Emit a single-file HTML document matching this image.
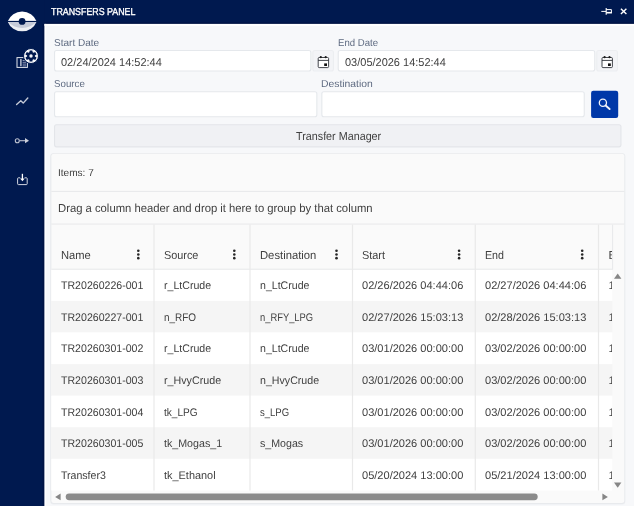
<!DOCTYPE html>
<html><head><meta charset="utf-8">
<style>
*{box-sizing:border-box;margin:0;padding:0}
html,body{width:634px;height:506px;overflow:hidden;background:#f7f8fa;font-family:"Liberation Sans",sans-serif;}
.t{position:absolute;white-space:pre;line-height:normal;transform-origin:0 0;text-rendering:geometricPrecision}
#w{position:absolute;left:-10px;top:-10px;width:654px;height:526px;filter:blur(.3px);overflow:hidden}
#in{position:absolute;left:10px;top:10px;width:634px;height:506px}
</style></head><body>
<div id="w"><div id="in">
<svg width="634" height="506" viewBox="0 0 634 506" style="position:absolute;left:0;top:0;overflow:visible">
<rect x="-10.00" y="-10.00" width="654.00" height="526.00" fill="#f7f8fa"/>
<rect x="-10.00" y="-10.00" width="654.00" height="33.90" fill="#00194f"/>
<rect x="-10.00" y="-10.00" width="54.50" height="526.00" fill="#00194f"/>
<rect x="42.60" y="23.90" width="1.90" height="492.10" fill="#001344"/>
<rect x="44.50" y="22.50" width="599.50" height="1.40" fill="#001344"/>
<rect x="44.50" y="23.90" width="599.50" height="2.00" fill="#ffffff"/>
<rect x="44.50" y="23.90" width="1.70" height="492.10" fill="#ffffff"/>
<rect x="54.55" y="50.55" width="256.30" height="20.40" fill="#fff" rx="2" stroke="#e5e8ec" stroke-width="1.1"/>
<rect x="312.85" y="50.55" width="20.60" height="20.40" fill="#f3f4f7" rx="2" stroke="#eceef1" stroke-width="1.1"/>
<rect x="338.25" y="50.55" width="256.50" height="20.40" fill="#fff" rx="2" stroke="#e5e8ec" stroke-width="1.1"/>
<rect x="596.75" y="50.55" width="20.70" height="20.40" fill="#f3f4f7" rx="2" stroke="#eceef1" stroke-width="1.1"/>
<rect x="54.55" y="91.75" width="262.30" height="25.00" fill="#fff" rx="2" stroke="#e5e8ec" stroke-width="1.1"/>
<rect x="321.85" y="91.75" width="262.40" height="25.00" fill="#fff" rx="2" stroke="#e5e8ec" stroke-width="1.1"/>
<rect x="591.10" y="90.70" width="27.10" height="27.20" fill="#0038a8" rx="2.2"/>
<rect x="54.55" y="124.75" width="566.40" height="22.10" fill="#f0f1f4" rx="2" stroke="#e3e5e9" stroke-width="1.1"/>
<rect x="50.10" y="153.10" width="575.30" height="351.50" fill="#eceef1" rx="3.5"/>
<rect x="50.80" y="153.60" width="574.00" height="350.00" fill="#e4e6ea" rx="3.2"/>
<rect x="51.30" y="153.80" width="573.10" height="349.20" fill="#fafafa" rx="2.5"/>
<rect x="51.30" y="190.90" width="573.10" height="1.10" fill="#e9eaec"/>
<rect x="51.30" y="223.50" width="573.10" height="1.10" fill="#e9eaec"/>
<rect x="51.30" y="269.30" width="561.00" height="31.60" fill="#ffffff"/>
<rect x="51.30" y="300.90" width="561.00" height="31.60" fill="#f5f5f5"/>
<rect x="51.30" y="332.50" width="561.00" height="31.60" fill="#ffffff"/>
<rect x="51.30" y="364.10" width="561.00" height="31.60" fill="#f5f5f5"/>
<rect x="51.30" y="395.70" width="561.00" height="31.60" fill="#ffffff"/>
<rect x="51.30" y="427.30" width="561.00" height="31.60" fill="#f5f5f5"/>
<rect x="51.30" y="458.90" width="561.00" height="31.60" fill="#ffffff"/>
<rect x="51.30" y="268.70" width="561.00" height="1.10" fill="#e9eaec"/>
<rect x="153.40" y="224.60" width="1.20" height="265.90" fill="#e9e9e9"/>
<rect x="249.40" y="224.60" width="1.20" height="265.90" fill="#e9e9e9"/>
<rect x="351.90" y="224.60" width="1.20" height="265.90" fill="#e9e9e9"/>
<rect x="474.70" y="224.60" width="1.20" height="265.90" fill="#e9e9e9"/>
<rect x="597.90" y="224.60" width="1.20" height="265.90" fill="#e9e9e9"/>
<rect x="612.00" y="224.60" width="1.10" height="45.20" fill="#e9eaec"/>
<circle cx="138.3" cy="250.75" r="1.3" fill="#262626"/>
<circle cx="138.3" cy="254.45" r="1.3" fill="#262626"/>
<circle cx="138.3" cy="258.15" r="1.3" fill="#262626"/>
<circle cx="234.3" cy="250.75" r="1.3" fill="#262626"/>
<circle cx="234.3" cy="254.45" r="1.3" fill="#262626"/>
<circle cx="234.3" cy="258.15" r="1.3" fill="#262626"/>
<circle cx="336.5" cy="250.75" r="1.3" fill="#262626"/>
<circle cx="336.5" cy="254.45" r="1.3" fill="#262626"/>
<circle cx="336.5" cy="258.15" r="1.3" fill="#262626"/>
<circle cx="459.1" cy="250.75" r="1.3" fill="#262626"/>
<circle cx="459.1" cy="254.45" r="1.3" fill="#262626"/>
<circle cx="459.1" cy="258.15" r="1.3" fill="#262626"/>
<circle cx="582.2" cy="250.75" r="1.3" fill="#262626"/>
<circle cx="582.2" cy="254.45" r="1.3" fill="#262626"/>
<circle cx="582.2" cy="258.15" r="1.3" fill="#262626"/>
</svg>
<div class="t" style="left:51.00px;top:7.20px;font-size:10.1px;color:#fff;transform:scaleX(0.8765);-webkit-text-stroke:0.35px #fff">TRANSFERS PANEL</div>
<div class="t" style="left:54.10px;top:38.00px;font-size:10.0px;color:#5e6a80;transform:scaleX(1.0037)">Start Date</div>
<div class="t" style="left:337.90px;top:38.00px;font-size:10.0px;color:#5e6a80;transform:scaleX(0.9592)">End Date</div>
<div class="t" style="left:54.10px;top:79.00px;font-size:10.0px;color:#5e6a80;transform:scaleX(0.9720)">Source</div>
<div class="t" style="left:321.30px;top:79.00px;font-size:10.0px;color:#5e6a80;transform:scaleX(1.0354)">Destination</div>
<div class="t" style="left:61.30px;top:56.50px;font-size:11.3px;color:#404040;transform:scaleX(0.9724)">02/24/2024 14:52:44</div>
<div class="t" style="left:345.30px;top:56.50px;font-size:11.3px;color:#404040;transform:scaleX(0.9724)">03/05/2026 14:52:44</div>
<div class="t" style="left:296.10px;top:129.60px;font-size:11.6px;color:#404040;transform:scaleX(0.9289)">Transfer Manager</div>
<div class="t" style="left:58.10px;top:167.90px;font-size:10.0px;color:#404040;transform:scaleX(1.0062)">Items: 7</div>
<div class="t" style="left:58.10px;top:201.60px;font-size:11.6px;color:#404040;transform:scaleX(0.9723)">Drag a column header and drop it here to group by that column</div>
<div class="t" style="left:61.40px;top:250.30px;font-size:11.5px;color:#404040;transform:scaleX(0.9711)">Name</div>
<div class="t" style="left:164.20px;top:250.30px;font-size:11.5px;color:#404040;transform:scaleX(0.9441)">Source</div>
<div class="t" style="left:260.40px;top:250.30px;font-size:11.5px;color:#404040;transform:scaleX(0.9783)">Destination</div>
<div class="t" style="left:362.40px;top:250.30px;font-size:11.5px;color:#404040;transform:scaleX(0.9466)">Start</div>
<div class="t" style="left:485.40px;top:250.30px;font-size:11.5px;color:#404040;transform:scaleX(0.9282)">End</div>
<div class="t" style="left:608.40px;top:250.30px;font-size:11.5px;color:#404040;width:4.1px;overflow:hidden">E</div>
<div class="t" style="left:61.40px;top:280.20px;font-size:11px;color:#404040;transform:scaleX(0.9623)">TR20260226-001</div>
<div class="t" style="left:164.20px;top:280.20px;font-size:11px;color:#404040;transform:scaleX(0.9628)">r_LtCrude</div>
<div class="t" style="left:260.40px;top:280.20px;font-size:11px;color:#404040;transform:scaleX(0.9616)">n_LtCrude</div>
<div class="t" style="left:362.40px;top:280.20px;font-size:11px;color:#404040;transform:scaleX(1.0036)">02/26/2026 04:44:06</div>
<div class="t" style="left:485.40px;top:280.20px;font-size:11px;color:#404040;transform:scaleX(1.0036)">02/27/2026 04:44:06</div>
<div class="t" style="left:608.40px;top:280.20px;font-size:11px;color:#404040;width:3.6px;overflow:hidden">1</div>
<div class="t" style="left:61.40px;top:311.82px;font-size:11px;color:#404040;transform:scaleX(0.9623)">TR20260227-001</div>
<div class="t" style="left:164.20px;top:311.82px;font-size:11px;color:#404040;transform:scaleX(0.9050)">n_RFO</div>
<div class="t" style="left:260.40px;top:311.82px;font-size:11px;color:#404040;transform:scaleX(0.8513)">n_RFY_LPG</div>
<div class="t" style="left:362.40px;top:311.82px;font-size:11px;color:#404040;transform:scaleX(1.0036)">02/27/2026 15:03:13</div>
<div class="t" style="left:485.40px;top:311.82px;font-size:11px;color:#404040;transform:scaleX(1.0036)">02/28/2026 15:03:13</div>
<div class="t" style="left:608.40px;top:311.82px;font-size:11px;color:#404040;width:3.6px;overflow:hidden">1</div>
<div class="t" style="left:61.40px;top:343.44px;font-size:11px;color:#404040;transform:scaleX(0.9623)">TR20260301-002</div>
<div class="t" style="left:164.20px;top:343.44px;font-size:11px;color:#404040;transform:scaleX(0.9628)">r_LtCrude</div>
<div class="t" style="left:260.40px;top:343.44px;font-size:11px;color:#404040;transform:scaleX(0.9616)">n_LtCrude</div>
<div class="t" style="left:362.40px;top:343.44px;font-size:11px;color:#404040;transform:scaleX(1.0036)">03/01/2026 00:00:00</div>
<div class="t" style="left:485.40px;top:343.44px;font-size:11px;color:#404040;transform:scaleX(1.0036)">03/02/2026 00:00:00</div>
<div class="t" style="left:608.40px;top:343.44px;font-size:11px;color:#404040;width:3.6px;overflow:hidden">1</div>
<div class="t" style="left:61.40px;top:375.06px;font-size:11px;color:#404040;transform:scaleX(0.9623)">TR20260301-003</div>
<div class="t" style="left:164.20px;top:375.06px;font-size:11px;color:#404040;transform:scaleX(0.9729)">r_HvyCrude</div>
<div class="t" style="left:260.40px;top:375.06px;font-size:11px;color:#404040;transform:scaleX(0.9666)">n_HvyCrude</div>
<div class="t" style="left:362.40px;top:375.06px;font-size:11px;color:#404040;transform:scaleX(1.0036)">03/01/2026 00:00:00</div>
<div class="t" style="left:485.40px;top:375.06px;font-size:11px;color:#404040;transform:scaleX(1.0036)">03/02/2026 00:00:00</div>
<div class="t" style="left:608.40px;top:375.06px;font-size:11px;color:#404040;width:3.6px;overflow:hidden">1</div>
<div class="t" style="left:61.40px;top:406.68px;font-size:11px;color:#404040;transform:scaleX(0.9623)">TR20260301-004</div>
<div class="t" style="left:164.20px;top:406.68px;font-size:11px;color:#404040;transform:scaleX(0.9158)">tk_LPG</div>
<div class="t" style="left:260.40px;top:406.68px;font-size:11px;color:#404040;transform:scaleX(0.8650)">s_LPG</div>
<div class="t" style="left:362.40px;top:406.68px;font-size:11px;color:#404040;transform:scaleX(1.0036)">03/01/2026 00:00:00</div>
<div class="t" style="left:485.40px;top:406.68px;font-size:11px;color:#404040;transform:scaleX(1.0036)">03/02/2026 00:00:00</div>
<div class="t" style="left:608.40px;top:406.68px;font-size:11px;color:#404040;width:3.6px;overflow:hidden">1</div>
<div class="t" style="left:61.40px;top:438.30px;font-size:11px;color:#404040;transform:scaleX(0.9623)">TR20260301-005</div>
<div class="t" style="left:164.20px;top:438.30px;font-size:11px;color:#404040;transform:scaleX(0.9693)">tk_Mogas_1</div>
<div class="t" style="left:260.40px;top:438.30px;font-size:11px;color:#404040;transform:scaleX(0.9655)">s_Mogas</div>
<div class="t" style="left:362.40px;top:438.30px;font-size:11px;color:#404040;transform:scaleX(1.0036)">03/01/2026 00:00:00</div>
<div class="t" style="left:485.40px;top:438.30px;font-size:11px;color:#404040;transform:scaleX(1.0036)">03/02/2026 00:00:00</div>
<div class="t" style="left:608.40px;top:438.30px;font-size:11px;color:#404040;width:3.6px;overflow:hidden">1</div>
<div class="t" style="left:61.40px;top:469.92px;font-size:11px;color:#404040;transform:scaleX(0.9599)">Transfer3</div>
<div class="t" style="left:164.20px;top:469.92px;font-size:11px;color:#404040;transform:scaleX(0.9926)">tk_Ethanol</div>
<div class="t" style="left:362.40px;top:469.92px;font-size:11px;color:#404040;transform:scaleX(1.0036)">05/20/2024 13:00:00</div>
<div class="t" style="left:485.40px;top:469.92px;font-size:11px;color:#404040;transform:scaleX(1.0036)">05/21/2024 13:00:00</div>
<div class="t" style="left:608.40px;top:469.92px;font-size:11px;color:#404040;width:3.6px;overflow:hidden">1</div>
<svg width="634" height="506" viewBox="0 0 634 506" style="position:absolute;left:0;top:0">
<!-- logo -->
<path d="M7.6 21.4 A15.6 15.6 0 0 1 36.7 21.4 Z" fill="#fff"/>
<path d="M7.6 21.4 A15.6 15.6 0 0 0 36.7 21.4 Z" fill="#eceef3"/>
<path d="M7.6 21.4 A19.5 19.5 0 0 0 36.7 21.4 Z" fill="#c6cbd9"/>
<rect x="7" y="20.9" width="30.4" height="1.1" fill="#00194f"/>
<circle cx="22.1" cy="21.4" r="3.4" fill="#00194f"/>
<!-- doc + gear -->
<rect x="17" y="57.6" width="10.4" height="9.8" fill="#00194f" stroke="#e4e7ee" stroke-width="1"/>
<rect x="18.4" y="59" width="1.6" height="7" fill="#e4e7ee" opacity=".0"/>
<rect x="20.3" y="59" width="1.2" height="7.2" fill="#e4e7ee"/>
<path d="M22.6 60.5h3.6M22.6 62.3h3.6M22.6 64.1h3.6M22.6 65.9h3.6" stroke="#9aa3bd" stroke-width=".9"/>
<circle cx="31" cy="56" r="7.5" fill="#f4f5f8" stroke="#00194f" stroke-width="1"/>
<g transform="translate(31 56)" fill="#00194f">
<circle r="3.9"/>
<g><rect x="-1.5" y="-5.6" width="3" height="11.2" rx=".5"/></g>
<rect x="-1.5" y="-5.6" width="3" height="11.2" rx=".5" transform="rotate(60)"/>
<rect x="-1.5" y="-5.6" width="3" height="11.2" rx=".5" transform="rotate(120)"/>
<circle r="1.7" fill="#f4f5f8"/>
</g>
<!-- trend -->
<path d="M16.6 104.6 L20.8 100.8 L23.2 103.1 L27.8 98" fill="none" stroke="#c4c9d6" stroke-width="1.4" stroke-linecap="round" stroke-linejoin="round"/>
<!-- circle-arrow -->
<circle cx="17.3" cy="140.7" r="2" fill="none" stroke="#bcc2d0" stroke-width="1.1"/>
<path d="M19.6 140.7H25.4" stroke="#bcc2d0" stroke-width="1.1"/>
<path d="M25 138.1 L29 140.7 L25 143.3Z" fill="#ccd0db"/>
<!-- download box -->
<path d="M20.2 177.8H18.4a.8.8 0 0 0-.8.8v5.2a.8.8 0 0 0 .8.8h8a.8.8 0 0 0 .8-.8v-5.2a.8.8 0 0 0-.8-.8H24.6" fill="none" stroke="#d3d7e2" stroke-width="1"/>
<path d="M22.4 173.8V179.5" stroke="#fff" stroke-width="1.3"/>
<path d="M20.1 178.6H24.7L22.4 181.2Z" fill="#fff"/>
<!-- pin -->
<path d="M601.3 11.4H606" stroke="#fff" stroke-width="1"/>
<path d="M606.2 7.9V14.8" stroke="#fff" stroke-width="1.1"/>
<path d="M606.2 9.6H611.4V12.9" fill="none" stroke="#fff" stroke-width="1"/>
<path d="M606.2 12.7H611.9" stroke="#fff" stroke-width="1.6"/>
<!-- close -->
<path d="M620.9 8.8L626.4 14.1M626.4 8.8L620.9 14.1" stroke="#fff" stroke-width="1.4"/>
<!-- calendars -->
<g fill="none" stroke="#2e3138">
<rect x="602" y="57.5" width="10.4" height="10.1" rx="1" fill="#fff" stroke-width="0.9"/>
<path d="M602 60.4H612.4" stroke-width="0.9"/>
<rect x="608" y="63.4" width="2.8" height="2.6" fill="#111" stroke="none"/>
<circle cx="604.6" cy="57.2" r="1.1" fill="#1c1c1c" stroke="none"/>
<circle cx="609.5" cy="57.2" r="1.1" fill="#1c1c1c" stroke="none"/>
</g>
<g transform="translate(-283.8 0)" fill="none" stroke="#2e3138">
<rect x="602" y="57.5" width="10.4" height="10.1" rx="1" fill="#fff" stroke-width="0.9"/>
<path d="M602 60.4H612.4" stroke-width="0.9"/>
<rect x="608" y="63.4" width="2.8" height="2.6" fill="#111" stroke="none"/>
<circle cx="604.6" cy="57.2" r="1.1" fill="#1c1c1c" stroke="none"/>
<circle cx="609.5" cy="57.2" r="1.1" fill="#1c1c1c" stroke="none"/>
</g>
<!-- search -->
<circle cx="602.9" cy="102.7" r="3.6" fill="none" stroke="#f2f4fa" stroke-width="1.3"/>
<path d="M605.6 105.5L609.6 109" stroke="#f2f4fa" stroke-width="1.9" stroke-linecap="round"/>
<!-- scroll arrows -->
<g fill="#868686">
<path d="M614 278.8L617.7 273.4L621.4 278.8Z"/>
<path d="M614 482.4L617.7 487.8L621.4 482.4Z"/>
<path d="M60.6 493.5L55.1 496.9L60.6 500.3Z"/>
<path d="M602.4 493.5L607.9 496.9L602.4 500.3Z"/>
<rect x="65.7" y="493.4" width="472" height="6.8" rx="3.4" fill="#8b8b8b"/>
</g>
</svg>

</div></div>
</body></html>
